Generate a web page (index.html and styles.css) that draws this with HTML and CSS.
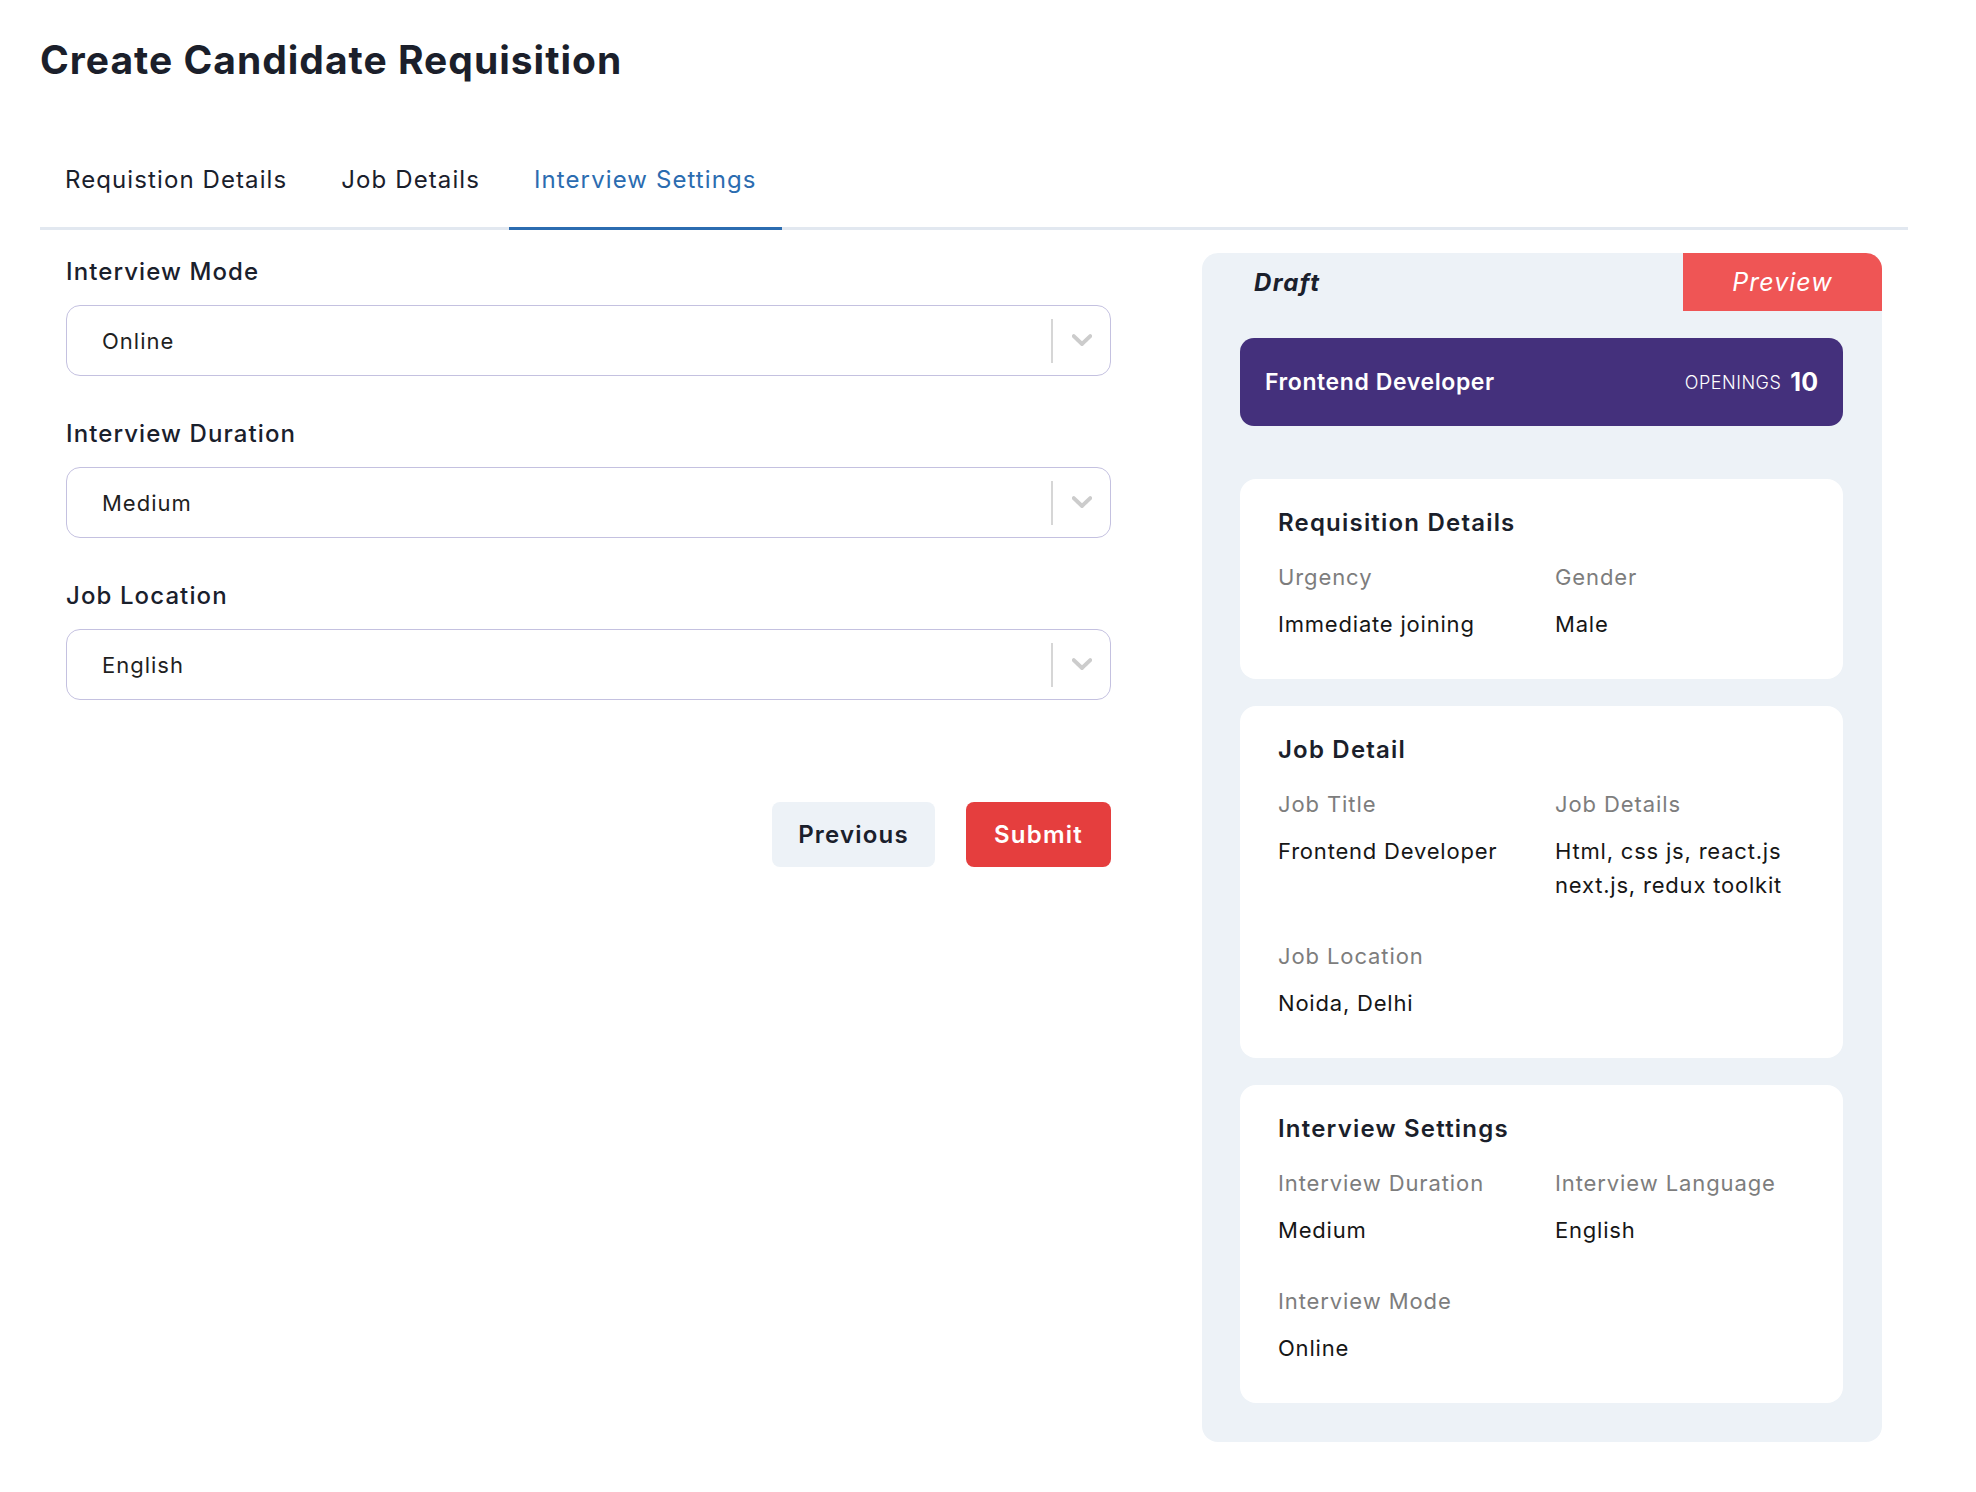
FILE: index.html
```html
<!DOCTYPE html>
<html lang="en">
<head>
<meta charset="utf-8">
<title>Create Candidate Requisition</title>
<link rel="stylesheet" href="styles.css">
</head>
<body>
<div class="page">
  <h1 class="title">Create Candidate Requisition</h1>
  <nav class="tabs">
    <div class="tab">Requistion Details</div>
    <div class="tab">Job Details</div>
    <div class="tab active">Interview Settings</div>
  </nav>
  <div class="content">
    <section class="form">
      <div class="field">
        <div class="label">Interview Mode</div>
        <div class="select">
          <span class="select-value">Online</span>
          <span class="indicators">
            <span class="sep"></span>
            <span class="chev"><svg width="20" height="13" viewBox="4.3 7.2 11.4 7.3"><path d="M4.516 7.548c0.436-0.446 1.043-0.481 1.576 0l3.908 3.747 3.908-3.747c0.533-0.481 1.141-0.446 1.574 0 0.436 0.445 0.408 1.197 0 1.615-0.406 0.418-4.695 4.502-4.695 4.502-0.217 0.223-0.502 0.335-0.787 0.335s-0.57-0.112-0.789-0.335c0 0-4.287-4.084-4.695-4.502s-0.436-1.170 0-1.615z" fill="#cccccc"/></svg></span>
          </span>
        </div>
      </div>
      <div class="field">
        <div class="label">Interview Duration</div>
        <div class="select">
          <span class="select-value">Medium</span>
          <span class="indicators">
            <span class="sep"></span>
            <span class="chev"><svg width="20" height="13" viewBox="4.3 7.2 11.4 7.3"><path d="M4.516 7.548c0.436-0.446 1.043-0.481 1.576 0l3.908 3.747 3.908-3.747c0.533-0.481 1.141-0.446 1.574 0 0.436 0.445 0.408 1.197 0 1.615-0.406 0.418-4.695 4.502-4.695 4.502-0.217 0.223-0.502 0.335-0.787 0.335s-0.57-0.112-0.789-0.335c0 0-4.287-4.084-4.695-4.502s-0.436-1.170 0-1.615z" fill="#cccccc"/></svg></span>
          </span>
        </div>
      </div>
      <div class="field">
        <div class="label">Job Location</div>
        <div class="select">
          <span class="select-value">English</span>
          <span class="indicators">
            <span class="sep"></span>
            <span class="chev"><svg width="20" height="13" viewBox="4.3 7.2 11.4 7.3"><path d="M4.516 7.548c0.436-0.446 1.043-0.481 1.576 0l3.908 3.747 3.908-3.747c0.533-0.481 1.141-0.446 1.574 0 0.436 0.445 0.408 1.197 0 1.615-0.406 0.418-4.695 4.502-4.695 4.502-0.217 0.223-0.502 0.335-0.787 0.335s-0.57-0.112-0.789-0.335c0 0-4.287-4.084-4.695-4.502s-0.436-1.170 0-1.615z" fill="#cccccc"/></svg></span>
          </span>
        </div>
      </div>
      <div class="actions">
        <button class="btn btn-prev">Previous</button>
        <button class="btn btn-submit">Submit</button>
      </div>
    </section>

    <aside class="panel">
      <div class="panel-head">
        <div class="draft">Draft</div>
        <div class="preview-tab">Preview</div>
      </div>
      <div class="panel-body">
        <div class="hero">
          <span class="hero-title">Frontend Developer</span>
          <span class="openings"><span class="openings-label">OPENINGS</span><span class="openings-num">10</span></span>
        </div>

        <div class="card">
          <h3 class="card-title">Requisition Details</h3>
          <div class="grid">
            <div class="item"><div class="k">Urgency</div><div class="v">Immediate joining</div></div>
            <div class="item"><div class="k">Gender</div><div class="v">Male</div></div>
          </div>
        </div>

        <div class="card">
          <h3 class="card-title">Job Detail</h3>
          <div class="grid">
            <div class="item"><div class="k">Job Title</div><div class="v">Frontend Developer</div></div>
            <div class="item"><div class="k">Job Details</div><div class="v">Html, css js, react.js<br>next.js, redux toolkit</div></div>
            <div class="item"><div class="k">Job Location</div><div class="v">Noida, Delhi</div></div>
          </div>
        </div>

        <div class="card">
          <h3 class="card-title">Interview Settings</h3>
          <div class="grid">
            <div class="item"><div class="k">Interview Duration</div><div class="v">Medium</div></div>
            <div class="item"><div class="k">Interview Language</div><div class="v">English</div></div>
            <div class="item"><div class="k">Interview Mode</div><div class="v">Online</div></div>
          </div>
        </div>
      </div>
    </aside>
  </div>
</div>
</body>
</html>
```

FILE: styles.css
```css
* { box-sizing: border-box; }

body {
  margin: 0;
  background: #ffffff;
  color: #1a202c;
  font-family: Inter, "Noto Sans", sans-serif;
}

.page {
  padding: 36px 68px 0 40px;
}

.title {
  margin: 0;
  font-size: 39px;
  line-height: 48px;
  font-weight: 700;
  letter-spacing: 1px;
  color: #1b1f2b;
}

.tabs {
  display: flex;
  gap: 4px;
  margin-top: 80px;
  border-bottom: 3px solid #e2e8f0;
}

.tab {
  padding: 0 25px 31px;
  font-size: 24px;
  line-height: 32px;
  letter-spacing: 1.1px;
  color: #1a202c;
  margin-bottom: -3px;
  border-bottom: 3px solid transparent;
}

.tab.active {
  color: #2b6cb0;
  border-bottom-color: #2b6cb0;
}

.content {
  display: flex;
  align-items: flex-start;
  gap: 91px;
  padding: 0 26px;
}

.form {
  width: 1045px;
  padding-top: 26px;
}

.field + .field {
  margin-top: 42px;
}

.label {
  font-size: 24px;
  line-height: 32px;
  font-weight: 500;
  letter-spacing: 1.1px;
  color: #1a202c;
}

.select {
  margin-top: 17px;
  height: 71px;
  border: 1.5px solid #c4c1e0;
  border-radius: 14px;
  display: flex;
  align-items: center;
  justify-content: space-between;
  padding-left: 35px;
}

.select-value {
  font-size: 22px;
  letter-spacing: 1px;
  color: #1f1f1f;
}

.indicators {
  display: flex;
  align-items: center;
  height: 100%;
}

.sep {
  width: 2px;
  height: 44px;
  background: #d6d6d6;
}

.chev {
  width: 57px;
  display: flex;
  justify-content: center;
  align-items: center;
}

.actions {
  display: flex;
  justify-content: flex-end;
  gap: 31px;
  margin-top: 102px;
}

.btn {
  height: 65px;
  border: none;
  border-radius: 8px;
  font-family: inherit;
  font-size: 24px;
  font-weight: 600;
  letter-spacing: 1.2px;
  padding: 0;
}

.btn-prev {
  width: 163px;
  background: #edf2f7;
  color: #1a202c;
}

.btn-submit {
  width: 145px;
  background: #e53e3e;
  color: #ffffff;
}

.panel {
  width: 680px;
  margin-top: 23px;
  background: #edf2f7;
  border-radius: 16px;
  padding-bottom: 39px;
}

.panel-head {
  display: flex;
  justify-content: space-between;
  height: 58px;
}

.draft {
  display: flex;
  align-items: center;
  padding-left: 52px;
  font-size: 24px;
  font-weight: 700;
  font-style: italic;
  letter-spacing: 1.4px;
  color: #1a202c;
}

.preview-tab {
  width: 199px;
  display: flex;
  align-items: center;
  justify-content: center;
  background: #ef5555;
  color: #ffffff;
  font-size: 25px;
  font-style: italic;
  letter-spacing: 1px;
  border-top-right-radius: 16px;
}

.panel-body {
  display: flex;
  flex-direction: column;
  gap: 27px;
  padding: 27px 39px 0 38px;
}

.hero {
  height: 88px;
  margin-bottom: 26px;
  background: #44307c;
  border-radius: 14px;
  display: flex;
  align-items: center;
  justify-content: space-between;
  padding: 0 25px;
  color: #ffffff;
}

.hero-title {
  font-size: 23px;
  font-weight: 600;
  letter-spacing: 0.6px;
}

.openings {
  display: flex;
  align-items: center;
  gap: 9px;
}

.openings-label {
  font-size: 18px;
  font-weight: 300;
  letter-spacing: 0.5px;
}

.openings-num {
  font-size: 25px;
  font-weight: 700;
}

.card {
  background: #ffffff;
  border-radius: 16px;
  padding: 27px 38px 38px;
}

.card-title {
  margin: 0;
  font-size: 24px;
  line-height: 34px;
  font-weight: 600;
  letter-spacing: 1.2px;
  color: #1b1f2b;
}

.grid {
  display: grid;
  grid-template-columns: 277px 1fr;
  row-gap: 37px;
  margin-top: 20px;
}

.k {
  font-size: 22px;
  line-height: 34px;
  letter-spacing: 0.9px;
  color: #7d7d7d;
}

.v {
  margin-top: 13px;
  font-size: 22px;
  line-height: 34px;
  letter-spacing: 0.8px;
  color: #161616;
}
```
